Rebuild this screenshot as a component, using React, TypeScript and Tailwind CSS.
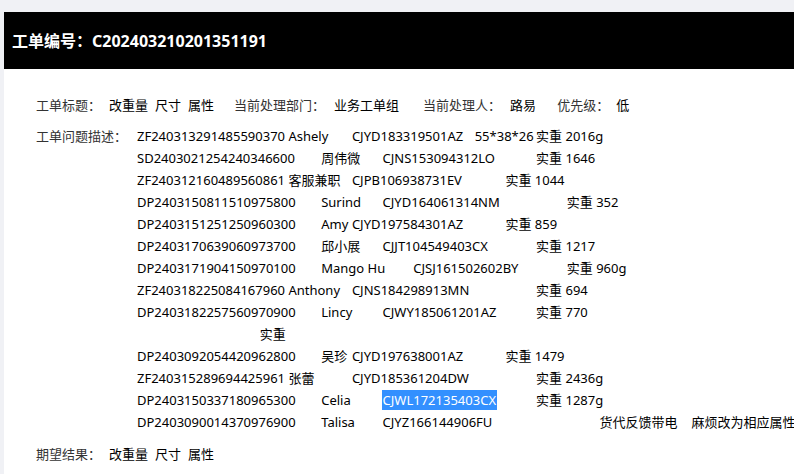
const TAB = 30.7;

type Seg = [string, number];

// each line: segments with tab-stop column (x = 137 + col * TAB)
const lines: Seg[][] = [
  [["ZF240313291485590370 Ashely", 0], ["CJYD183319501AZ", 7], ["55*38*26", 11], ["实重 2016g", 13]],
  [["SD2403021254240346600", 0], ["周伟微", 6], ["CJNS153094312LO", 8], ["实重 1646", 13]],
  [["ZF240312160489560861 客服兼职", 0], ["CJPB106938731EV", 7], ["实重 1044", 12]],
  [["DP2403150811510975800", 0], ["Surind", 6], ["CJYD164061314NM", 8], ["实重 352", 14]],
  [["DP2403151251250960300", 0], ["Amy", 6], ["CJYD197584301AZ", 7], ["实重 859", 12]],
  [["DP2403170639060973700", 0], ["邱小展", 6], ["CJJT104549403CX", 8], ["实重 1217", 13]],
  [["DP2403171904150970100", 0], ["Mango Hu", 6], ["CJSJ161502602BY", 9], ["实重 960g", 14]],
  [["ZF240318225084167960 Anthony", 0], ["CJNS184298913MN", 7], ["实重 694", 13]],
  [["DP2403182257560970900", 0], ["Lincy", 6], ["CJWY185061201AZ", 8], ["实重 770", 13]],
  [["实重", 4]],
  [["DP2403092054420962800", 0], ["吴珍", 6], ["CJYD197638001AZ", 7], ["实重 1479", 12]],
  [["ZF240315289694425961 张蕾", 0], ["CJYD185361204DW", 7], ["实重 2436g", 13]],
  [["DP2403150337180965300", 0], ["Celia", 6], ["CJWL172135403CX", 8], ["实重 1287g", 13]],
  [["DP2403090014370976900", 0], ["Talisa", 6], ["CJYZ166144906FU", 8], ["货代反馈带电|麻烦改为相应属性", 15]],
];

function Line({ segs, idx }: { segs: Seg[]; idx: number }) {
  return (
    <div className="h-[22px] leading-[22px] whitespace-pre flex">
      {segs.map(([text, col], i) => {
        const offset = i === 0 ? col * TAB : 0;
        const next = segs[i + 1];
        const width = next ? (next[1] - col) * TAB : undefined;
        const selected = idx === 12 && i === 2;
        let content: React.ReactNode = text;
        if (selected) {
          content = (
            <span className="bg-[#3390ff] text-white inline-block h-[20px] leading-[20px] px-px -ml-px">{text}</span>
          );
        } else if (text.includes("|")) {
          const [a, b] = text.split("|");
          content = (
            <>
              <span className="ml-[2px]">{a}</span>
              <span className="ml-[14px]">{b}</span>
            </>
          );
        }
        return (
          <span key={i} className="shrink-0" style={{ marginLeft: offset, width }}>
            {content}
          </span>
        );
      })}
    </div>
  );
}

function Attrs() {
  return (
    <span className="ml-[8px]">
      改重量<span className="ml-[7px]">尺寸</span>
      <span className="ml-[7px]">属性</span>
    </span>
  );
}

export default function App() {
  return (
    <div
      className="w-[794px] h-[474px] overflow-hidden bg-[#f0f1f5] pt-3 pl-1"
      style={{ fontFamily: '"Noto Sans", "Noto Sans CJK SC", sans-serif' }}
    >
      <div className="bg-white h-full w-[900px]">
        <div className="bg-black h-[57px] flex items-center pl-2 text-white text-[16px] font-bold">
          工单编号：C202403210201351191
        </div>
        <div className="pl-8 pt-[25px] text-[13px] text-black">
          <div className="flex h-[22px] leading-[22px] whitespace-pre">
            <span className="text-[#333]">工单标题：</span>
            <Attrs />
            <span className="ml-[20px] text-[#333]">当前处理部门：</span>
            <span className="ml-[9px]">业务工单组</span>
            <span className="ml-[24px] text-[#333]">当前处理人：</span>
            <span className="ml-[9px]">路易</span>
            <span className="ml-[21px] text-[#333]">优先级：</span>
            <span className="ml-[7px]">低</span>
          </div>
          <div className="flex mt-[9px]">
            <span className="text-[#333] w-[101px] shrink-0 h-[22px] leading-[22px]">工单问题描述：</span>
            <div className="flex flex-col">
              {lines.map((segs, i) => (
                <Line key={i} segs={segs} idx={i} />
              ))}
            </div>
          </div>
          <div className="flex h-[22px] leading-[22px] mt-[10px] whitespace-pre">
            <span className="text-[#333]">期望结果：</span>
            <Attrs />
          </div>
        </div>
      </div>
    </div>
  );
}
